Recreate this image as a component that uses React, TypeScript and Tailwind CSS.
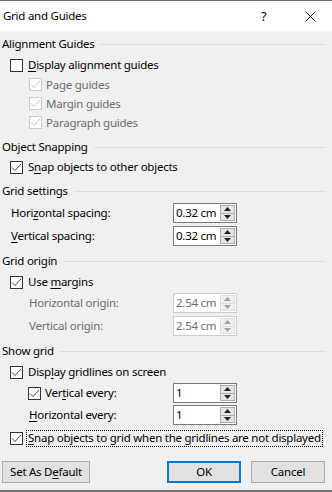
import React from 'react';

const FONT = { fontFamily: '"Noto Sans", "Open Sans", sans-serif' };

// access-key underline helper: label split in pre / key / post
const Key = ({ pre, k, post }: { pre: string; k: string; post: string }) => (
  <span>
    {pre}
    <span className="underline underline-offset-2">{k}</span>
    {post}
  </span>
);

const Check = ({ checked, disabled }: { checked?: boolean; disabled?: boolean }) => (
  <span
    className={`flex h-[13px] w-[13px] shrink-0 items-center justify-center border bg-white ${
      disabled ? 'border-[#cccccc]' : 'border-[#333333]'
    }`}
  >
    {checked && (
      <svg width="11" height="11" viewBox="0 0 11 11">
        <polyline
          points="1,5.5 4,8.5 10,2"
          fill="none"
          stroke={disabled ? '#c4c4c4' : '#444444'}
          strokeWidth="1"
        />
      </svg>
    )}
  </span>
);

const Header = ({ label, className = '' }: { label: string; className?: string }) => (
  <div className={`flex h-5 items-center gap-[6px] pl-[2px] pr-[6px] ${className}`}>
    <span className="whitespace-nowrap">{label}</span>
    <div className="h-px flex-1 bg-[#dcdcdc]" />
  </div>
);

const Spin = ({ value, disabled }: { value: string; disabled?: boolean }) => (
  <div
    className={`flex h-5 w-[64px] items-center border bg-white pl-[2px] pr-[1px] ${
      disabled ? 'border-[#cccccc] text-[#6d6d6d]' : 'border-[#7a7a7a] text-black'
    }`}
  >
    <span className="flex-1 whitespace-nowrap">{value}</span>
    <div className="flex h-[16px] w-[15px] flex-col">
      {['up', 'down'].map((d) => (
        <div
          key={d}
          className={`flex flex-1 items-center justify-center border ${
            disabled ? 'border-[#dddddd] bg-[#f0f0f0]' : 'border-[#adadad] bg-[#e5e5e5]'
          } ${d === 'down' ? 'border-t-0' : ''}`}
        >
          <svg width="7" height="4" viewBox="0 0 7 4">
            <polygon
              points={d === 'up' ? '3.5,0 7,4 0,4' : '0,0 7,0 3.5,4'}
              fill={disabled ? '#a0a0a0' : '#222222'}
            />
          </svg>
        </div>
      ))}
    </div>
  </div>
);

const Btn = ({ children, primary, className = '' }: { children: React.ReactNode; primary?: boolean; className?: string }) => (
  <div
    className={`flex h-[22px] items-center justify-center bg-[#e1e1e1] ${
      primary ? 'border-2 border-[#0078d7]' : 'border border-[#adadad]'
    } ${className}`}
  >
    {children}
  </div>
);

export default function App() {
  return (
    <div
      className="flex h-[492px] w-[332px] flex-col overflow-hidden border-b-2 border-[#707070] bg-[#f0f0f0] text-[11.5px] leading-none tracking-[-0.25px] text-black"
      style={FONT}
    >
      {/* Title bar */}
      <div className="flex h-[31px] shrink-0 items-center border-t border-[#6e6e6e] bg-white pl-[3px]">
        <span className="flex-1">Grid and Guides</span>
        <span className="w-[14px] text-[13px]">?</span>
        <svg className="ml-[30px] mr-[16px]" width="11" height="11" viewBox="0 0 11 11">
          <path d="M0.5 0.5 L10.5 10.5 M10.5 0.5 L0.5 10.5" stroke="#111" strokeWidth="1" />
        </svg>
      </div>

      {/* Alignment Guides */}
      <Header label="Alignment Guides" className="mt-[3px]" />
      <div className="mt-px flex h-5 items-center gap-[5px] pl-[10px]">
        <Check />
        <Key pre="" k="D" post="isplay alignment guides" />
      </div>
      {['Page guides', 'Margin guides', 'Paragraph guides'].map((l) => (
        <div key={l} className="flex h-[19px] items-center gap-[4px] pl-[29px] text-[#6d6d6d]">
          <Check checked disabled />
          <span>{l}</span>
        </div>
      ))}

      {/* Object Snapping */}
      <Header label="Object Snapping" className="mt-[5px]" />
      <div className="flex h-5 items-center gap-[5px] pl-[10px]">
        <Check checked />
        <Key pre="S" k="n" post="ap objects to other objects" />
      </div>

      {/* Grid settings */}
      <Header label="Grid settings" className="mt-[4px]" />
      <div className="mt-[2px] flex h-5 items-center pl-[11px]">
        <span className="w-[162px]">
          <Key pre="Hori" k="z" post="ontal spacing:" />
        </span>
        <Spin value="0.32 cm" />
      </div>
      <div className="mt-[3px] flex h-5 items-center pl-[11px]">
        <span className="w-[162px]">
          <Key pre="" k="V" post="ertical spacing:" />
        </span>
        <Spin value="0.32 cm" />
      </div>

      {/* Grid origin */}
      <Header label="Grid origin" className="mt-[5px]" />
      <div className="mt-px flex h-5 items-center gap-[5px] pl-[10px]">
        <Check checked />
        <Key pre="Use " k="m" post="argins" />
      </div>
      <div className="mt-px flex h-5 items-center pl-[29px] text-[#6d6d6d]">
        <span className="w-[144px]">Horizontal origin:</span>
        <Spin value="2.54 cm" disabled />
      </div>
      <div className="mt-[3px] flex h-5 items-center pl-[29px] text-[#6d6d6d]">
        <span className="w-[144px]">Vertical origin:</span>
        <Spin value="2.54 cm" disabled />
      </div>

      {/* Show grid */}
      <Header label="Show grid" className="mt-[5px]" />
      <div className="mt-px flex h-5 items-center gap-[5px] pl-[10px]">
        <Check checked />
        <Key pre="Disp" k="l" post="ay gridlines on screen" />
      </div>
      <div className="mt-px flex h-5 items-center pl-[28px]">
        <div className="flex w-[145px] items-center gap-[4px]">
          <Check checked />
          <Key pre="Ver" k="t" post="ical every:" />
        </div>
        <Spin value="1" />
      </div>
      <div className="mt-[2px] flex h-5 items-center pl-[29px]">
        <span className="w-[144px]">
          <Key pre="" k="H" post="orizontal every:" />
        </span>
        <Spin value="1" />
      </div>
      <div className="mt-[3px] flex h-5 items-center gap-[3px] pl-[10px]">
        <Check checked />
        <span className="flex h-[17px] items-center whitespace-nowrap border border-dotted border-black px-px">
          <Key pre="" k="S" post="nap objects to grid when the gridlines are not displayed" />
        </span>
      </div>

      {/* Buttons */}
      <div className="mt-[13px] flex items-center pl-[2px]">
        <Btn className="w-[88px]">
          <Key pre="Set As D" k="e" post="fault" />
        </Btn>
        <Btn primary className="ml-[77px] w-[74px]">OK</Btn>
        <Btn className="ml-[10px] w-[74px]">Cancel</Btn>
      </div>
    </div>
  );
}
